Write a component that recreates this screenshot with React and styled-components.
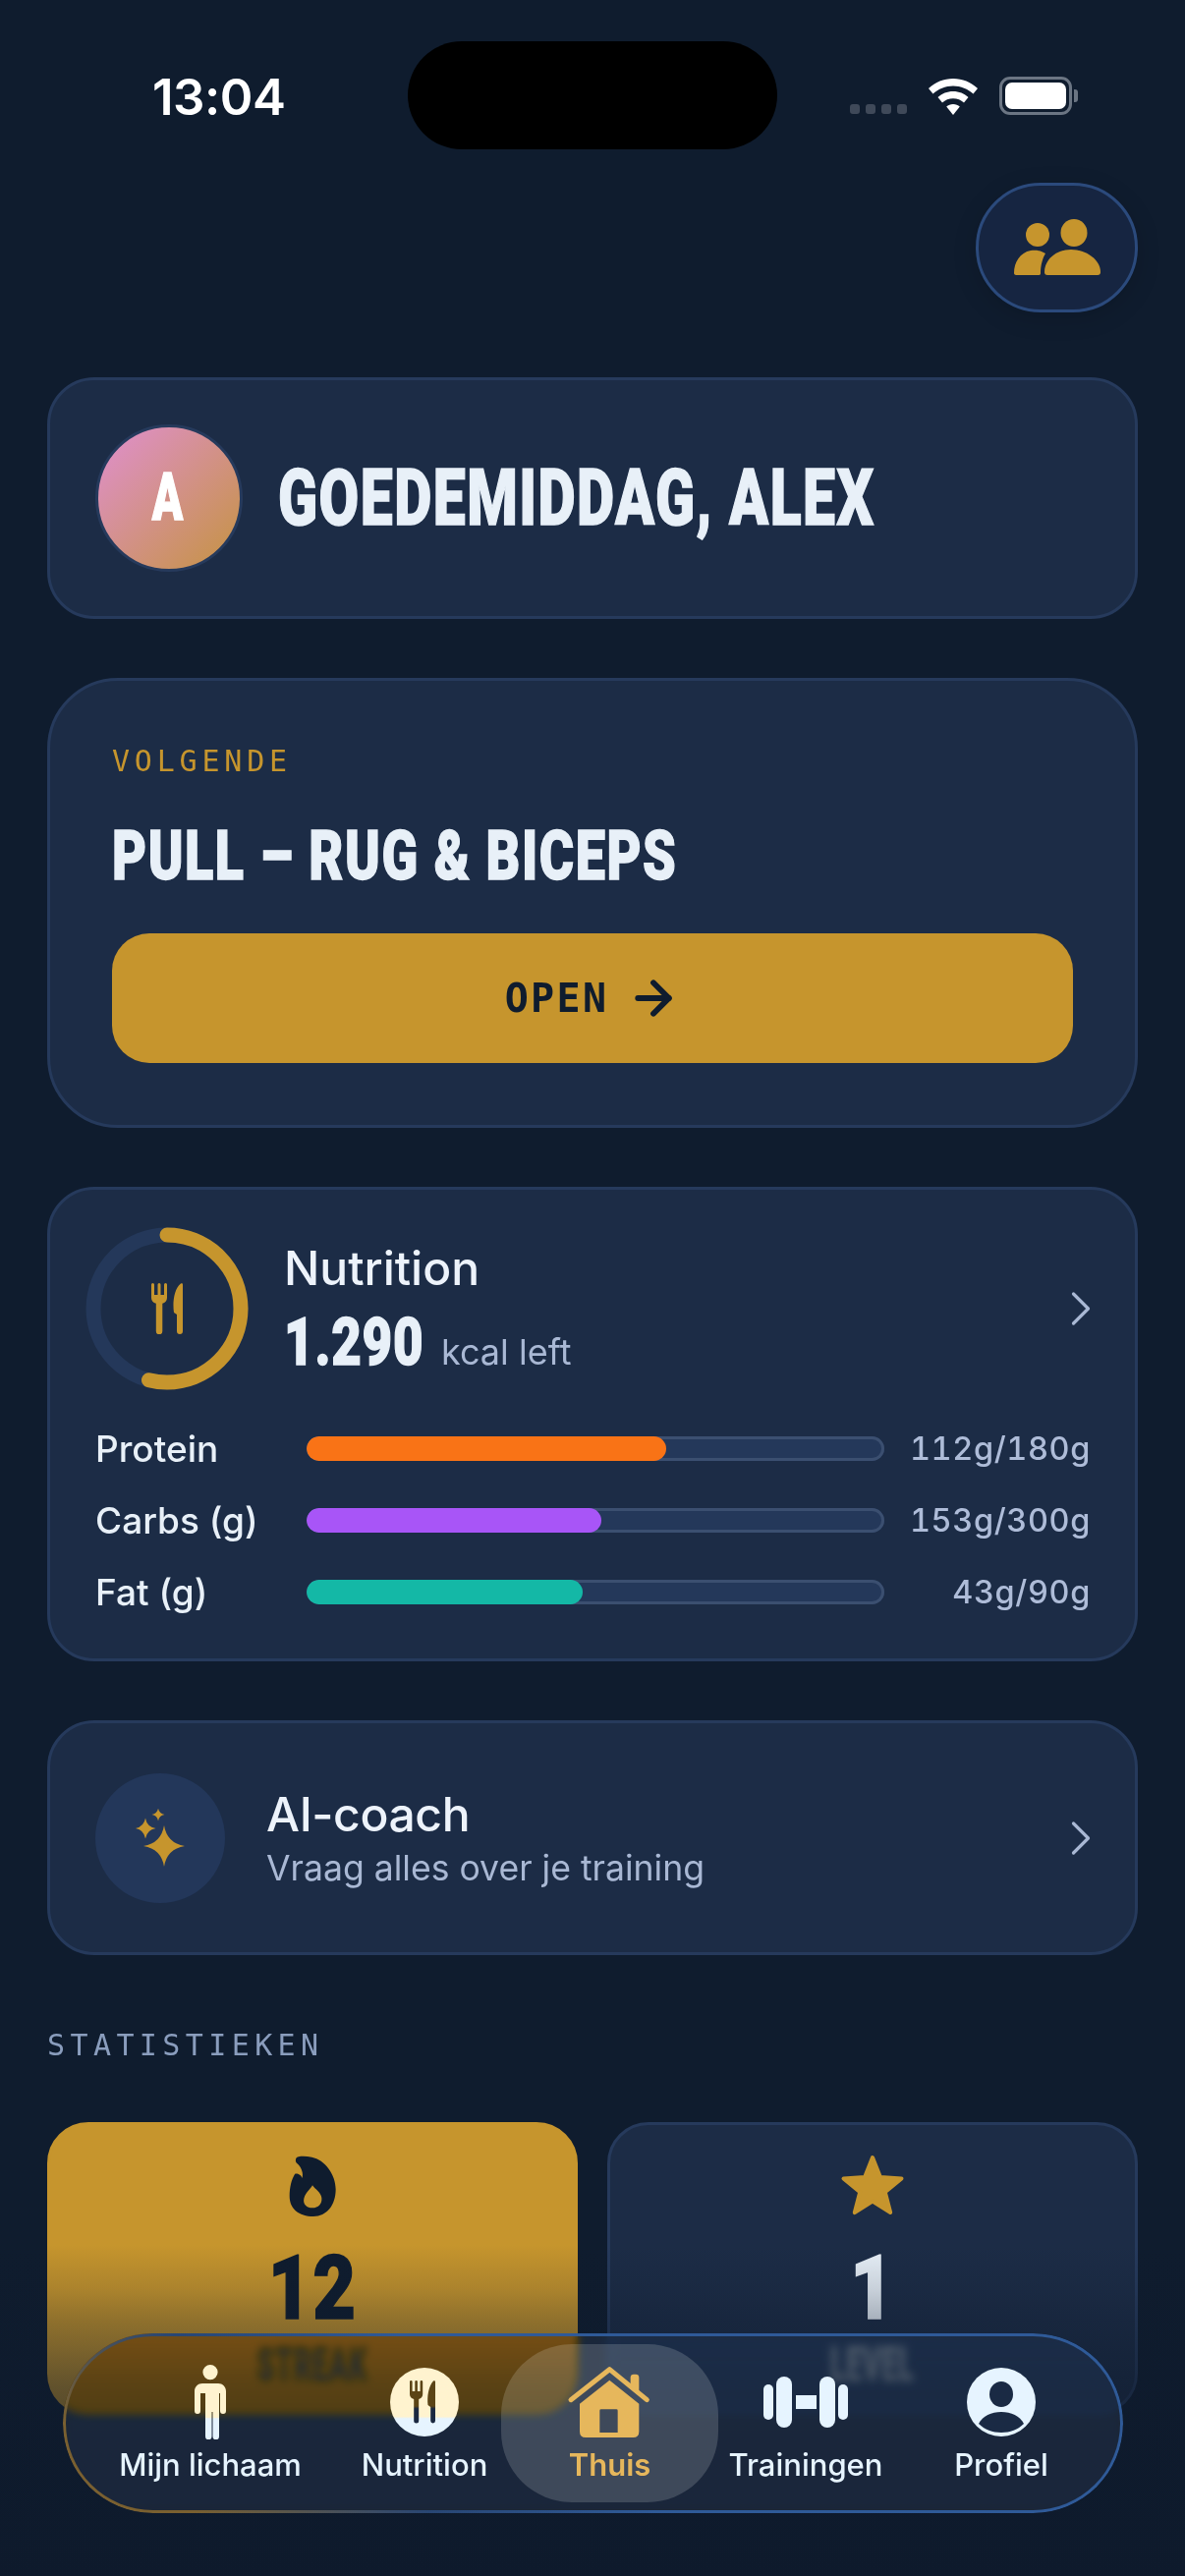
import React from 'react'
import styled, { createGlobalStyle } from 'styled-components'
import { ArrowRight, ChevronRight } from 'lucide-react'

const GlobalStyle = createGlobalStyle`
  html, body { margin: 0; padding: 0; background: #0f1c2e; }
  * { box-sizing: border-box; }
`

const Mono = `"DejaVu Sans Mono", "Liberation Mono", monospace`

// no condensed display face is installed, so the heavy face gets squeezed
const Display = styled.div`
  font-family: Roboto, "Liberation Sans", sans-serif;
  font-weight: 900;
  white-space: nowrap;
  font-size: ${p => p.$size}px;
  line-height: ${p => p.$line || p.$size}px;
  letter-spacing: ${p => p.$spacing || 0}px;
  -webkit-text-stroke: 1.4px currentColor;
  transform: scaleX(${p => p.$sx});
  transform-origin: ${p => p.$origin || 'left'} center;
  color: ${p => p.$color || 'inherit'};
`

const Screen = styled.div`
  position: relative;
  width: 1206px;
  height: 2622px;
  overflow: hidden;
  padding: 42px 48px 0;
  background: #0f1c2e;
  font-family: Inter, "Noto Sans", sans-serif;
  color: #e8f0f8;
`

const StatusBar = styled.div`
  display: flex;
  align-items: center;
  height: 110px;
`
const Time = styled.div`
  width: 367px;
  padding-left: 107px;
  padding-top: 2px;
  font-size: 51px;
  font-weight: 600;
  letter-spacing: -0.5px;
  color: #fff;
`
const Island = styled.div`
  width: 376px;
  height: 110px;
  border-radius: 55px;
  background: #000;
`
const StatusIcons = styled.div`
  display: flex;
  align-items: flex-end;
  gap: 22px;
  height: 40px;
  margin-left: 74px;
  padding-top: 2px;
`
const SignalDots = styled.div`
  display: flex;
  gap: 6px;
  margin-bottom: 1px;
`
const SignalDot = styled.span`
  width: 10px;
  height: 10px;
  border-radius: 3px;
  background: #3f4959;
`
const Battery = styled.div`
  position: relative;
  width: 74px;
  height: 39px;
  padding: 3px;
  border: 3px solid #6b7583;
  border-radius: 11px;
  &::after {
    content: '';
    position: absolute;
    right: -9px;
    top: 10px;
    width: 4px;
    height: 13px;
    border-radius: 0 3px 3px 0;
    background: #6b7583;
  }
`
const BatteryFill = styled.div`
  height: 100%;
  border-radius: 7px;
  background: #fff;
`

const TopRow = styled.div`
  display: flex;
  justify-content: flex-end;
  margin-top: 34px;
`
const TeamButton = styled.div`
  display: flex;
  align-items: center;
  justify-content: center;
  width: 165px;
  height: 132px;
  border-radius: 66px;
  border: 3px solid #2b4a7c;
  background: #162541;
  box-shadow: 0 6px 24px rgba(0, 0, 0, 0.15);
`

const Stack = styled.div`
  display: flex;
  flex-direction: column;
  margin-top: 66px;
`
const Card = styled.div`
  background: #1c2c46;
  border: 3px solid #263a5c;
  border-radius: ${p => p.$radius || 48}px;
  margin-bottom: 60px;
`

const GreetingCard = styled(Card)`
  display: flex;
  align-items: center;
  gap: 36px;
  height: 246px;
  padding-left: 46px;
`
const Avatar = styled.div`
  display: flex;
  flex: none;
  align-items: center;
  justify-content: center;
  width: 150px;
  height: 150px;
  padding-right: 3px;
  border-radius: 50%;
  border: 3px solid #263a5c;
  background: linear-gradient(135deg, #e08fd0 0%, #c59340 100%);
  color: #fff;
`

const NextCard = styled(Card)`
  height: 458px;
  padding: 66px 63px 0;
`
const Eyebrow = styled.div`
  font-family: ${Mono};
  font-size: 30px;
  line-height: 32px;
  letter-spacing: ${p => p.$spacing}px;
  color: ${p => p.$color};
`
const WorkoutTitle = styled(Display)`
  margin-top: 44px;
`
const OpenButton = styled.div`
  display: flex;
  align-items: center;
  justify-content: center;
  gap: 19px;
  height: 132px;
  margin-top: 44px;
  border-radius: 38px;
  background: #c6952d;
  color: #0f1c2e;
  font-family: ${Mono};
  font-weight: 700;
  font-size: 40px;
  letter-spacing: 2.3px;
`

const NutritionCard = styled(Card)`
  height: 483px;
  padding: 37px 46px 0;
`
const NutritionHead = styled.div`
  display: flex;
  align-items: center;
  gap: 35px;
  height: 168px;
  margin-left: -11px;
`
const Ring = styled.div`
  position: relative;
  flex: none;
  width: 168px;
  height: 168px;
`
const RingIcon = styled.div`
  position: absolute;
  inset: 0;
  display: flex;
  align-items: center;
  justify-content: center;
`
const HeadText = styled.div`
  flex: 1;
  padding-bottom: 5px;
`
const CardTitle = styled.div`
  font-size: 48px;
  line-height: 58px;
  font-weight: 500;
  color: #edf3fb;
`
const CoachTitle = styled(CardTitle)`
  letter-spacing: -0.4px;
`
const KcalLine = styled.div`
  display: flex;
  align-items: baseline;
  margin-top: 18px;
`
const KcalBox = styled.div`
  width: 160px;
`
const MutedText = styled.div`
  font-size: 36px;
  color: #a9b8d4;
`
const Chevron = styled(ChevronRight)`
  flex: none;
  margin-right: -21px;
  color: #a9b8d4;
`
const MacroList = styled.div`
  display: grid;
  gap: 37px;
  margin-top: 40px;
`
const MacroRow = styled.div`
  display: flex;
  align-items: center;
  height: 36px;
`
const MacroName = styled.div`
  width: 215px;
  font-size: 37px;
  font-weight: 500;
  color: #e8f0f8;
`
const Track = styled.div`
  flex: none;
  width: 588px;
  height: 25px;
  border-radius: 13px;
  background: #24385a;
  box-shadow: inset 0 0 0 3px #3b4f70;
  overflow: hidden;
`
const Fill = styled.div`
  height: 100%;
  border-radius: 13px;
  background: ${p => p.$color};
`
const MacroValue = styled.div`
  flex: 1;
  margin-right: -1px;
  text-align: right;
  font-size: 32.5px;
  font-weight: 500;
  font-variant-numeric: tabular-nums;
  letter-spacing: 0.6px;
  color: #aebcd8;
`

const CoachCard = styled(Card)`
  display: flex;
  align-items: center;
  height: 239px;
  padding: 0 46px;
`
const SparkleCircle = styled.div`
  display: flex;
  flex: none;
  align-items: center;
  justify-content: center;
  width: 132px;
  height: 132px;
  margin-right: 42px;
  border-radius: 50%;
  background: #23375a;
`
const CoachText = styled.div`
  flex: 1;
`
const CoachSub = styled(MutedText)`
  margin-top: 4px;
  font-size: 35.6px;
`

const StatsHeading = styled(Eyebrow)`
  margin-top: 16px;
`
const StatsGrid = styled.div`
  display: grid;
  grid-template-columns: 540px 540px;
  gap: 30px;
  margin-top: 62px;
`
const StatCard = styled.div`
  display: flex;
  flex-direction: column;
  align-items: center;
  height: 298px;
  padding-top: 26px;
  border-radius: 42px;
  border: 3px solid ${p => (p.$gold ? '#c6952d' : '#263a5c')};
  background: ${p => (p.$gold ? '#c6952d' : '#1c2c46')};
  color: ${p => (p.$gold ? '#0f1c2e' : '#e8f0f8')};
`
const StatIcon = styled.div`
  display: flex;
  align-items: center;
  justify-content: center;
  height: 72px;
`
const StatValue = styled(Display)`
  margin-top: 29px;
`
const StatLabel = styled(Display)`
  margin-top: 17px;
  opacity: 0.75;
`

const Scrim = styled.div`
  position: absolute;
  left: 0;
  right: 0;
  bottom: 0;
  height: 337px;
  pointer-events: none;
  background: linear-gradient(
    180deg,
    rgba(14, 26, 44, 0) 0%,
    rgba(14, 26, 44, 0.14) 13%,
    rgba(14, 26, 44, 0.3) 23%,
    rgba(14, 26, 44, 0.55) 43%,
    rgba(14, 26, 44, 0.92) 100%
  );
`
const NavBar = styled.nav`
  position: absolute;
  left: 64px;
  top: 2375px;
  width: 1079px;
  height: 183px;
  padding-left: 10px;
  border-radius: 92px;
  display: grid;
  grid-template-columns: 280px 156px 221px 178px 220px;
  background: rgba(54, 50, 42, 0.48);
  backdrop-filter: blur(4px) saturate(2.6);
  &::after {
    content: '';
    position: absolute;
    inset: 0;
    padding: 3px;
    border-radius: inherit;
    background: linear-gradient(215deg, #2f5a98 55%, #284674 72%, #7a6030 90%);
    -webkit-mask: linear-gradient(#000 0 0) content-box, linear-gradient(#000 0 0);
    -webkit-mask-composite: xor;
    mask-composite: exclude;
    pointer-events: none;
  }
`
const NavItem = styled.div`
  display: flex;
  flex-direction: column;
  align-items: center;
  height: 161px;
  margin-top: 11px;
  border-radius: 72px;
  background: ${p => (p.$active ? 'rgba(255, 255, 255, 0.16)' : 'transparent')};
  color: ${p => (p.$active ? '#e6b75c' : '#e6f4ff')};
  font-size: 31px;
  font-weight: ${p => (p.$active ? 600 : 500)};
`
const NavIcon = styled.div`
  display: flex;
  align-items: center;
  justify-content: center;
  height: 76px;
  margin-top: 21px;
`
const NavLabel = styled.div`
  margin-top: 7px;
  line-height: 38px;
  white-space: nowrap;
`

const Utensils = ({ height, fill }) => (
  <svg width={(height * 32) / 52} height={height} viewBox="0 0 32 52">
    <path
      fill={fill}
      d="M0 1.5a1.5 1.5 0 0 1 3 0V12H6.5V1.5a1.5 1.5 0 0 1 3 0V12H13V1.5a1.5 1.5 0 0 1 3 0V15c0 3-2 5-4.7 5.8V49a3.2 3.2 0 0 1-6.5 0V20.8C2 20 0 18 0 15Z"
    />
    <path fill={fill} d="M32 1.5V49a3 3 0 0 1-6 0V32l-3-2C21.5 20 23 6 30 .5 31-.2 32 .3 32 1.5Z" />
  </svg>
)

const TeamIcon = () => (
  <svg width="88" height="58" viewBox="0 0 88 58" fill="#c6952d">
    <ellipse cx="24" cy="16" rx="12" ry="12" />
    <ellipse cx="61" cy="14" rx="13.5" ry="14" />
    <path d="M0 55c0-11 6-21 17-23 5-1 11 0 15 3-3 5-5 12-5 20 0 1-.5 2-1.5 2H2c-1 0-2-1-2-2Z" />
    <path d="M34 57c-2 0-3-1-3-3 0-13 12-23 27-23s30 10 30 23c0 2-1 3-3 3Z" />
  </svg>
)

const star4 = (cx, cy, r) => {
  const k = r * 0.14
  return `M${cx} ${cy - r}Q${cx + k} ${cy - k} ${cx + r} ${cy}Q${cx + k} ${cy + k} ${cx} ${cy + r}Q${cx - k} ${cy + k} ${cx - r} ${cy}Q${cx - k} ${cy - k} ${cx} ${cy - r}Z`
}
const SparkleIcon = () => (
  <svg width="50" height="60" viewBox="0 0 50 60" fill="#c6952d">
    <path d={star4(29, 38, 21)} />
    <path d={star4(10, 20, 10.5)} />
    <path d={star4(23, 6, 6.5)} />
  </svg>
)

const FlameIcon = () => (
  <svg width="80" height="80" viewBox="-8 0 240 240" fill="#0f1c2e">
    <path
      fillRule="evenodd"
      d="M62 35C66 28 90 28 110 32 150 40 183 85 183 130 183 180 155 213 115 213 70 213 42 190 42 150 42 125 48 100 58 84 62 80 78 84 80 96 86 84 78 60 64 50 60 46 60 40 62 35ZM112 118C106 130 92 138 86 158 82 176 95 187 112 187 130 187 142 174 140 156 138 140 120 130 112 118Z"
    />
  </svg>
)

const StarIcon = () => (
  <svg width="66" height="64" viewBox="0 0 66 64" fill="#c6952d" stroke="#c6952d" strokeWidth="4" strokeLinejoin="round">
    <path d="M33 3 40.9 23.100 62.500 24.400 45.800 38.200 51.200 59.100 33 47.500 14.800 59.100 20.200 38.200 3.500 24.400 25.100 23.100Z" />
  </svg>
)

const PersonIcon = () => (
  <svg width="32" height="76" viewBox="0 0 32 76">
    <defs>
      <linearGradient id="personFill" x1="0" y1="0" x2="0" y2="1">
        <stop offset="0.7" stopColor="#fff3cf" />
        <stop offset="0.72" stopColor="#e6f4ff" />
      </linearGradient>
    </defs>
    <path
      fill="url(#personFill)"
      d="M16 0a7.600 7.600 0 1 1 0 15.200A7.600 7.600 0 0 1 16 0ZM8 19h16c4.500 0 8 3.500 8 8v20a3 3 0 0 1-6 0V29h-1v44a3.200 3.200 0 0 1-6.500 0V48h-1v25a3.200 3.200 0 0 1-6.500 0V29H6v18a3 3 0 0 1-6 0V27c0-4.500 3.500-8 8-8Z"
    />
  </svg>
)

const NutritionNavIcon = () => (
  <svg width="70" height="70" viewBox="0 0 70 70">
    <defs>
      <linearGradient id="plateFill" x1="0" y1="0" x2="0" y2="1">
        <stop offset="0.71" stopColor="#fff3cf" />
        <stop offset="0.74" stopColor="#e6f4ff" />
      </linearGradient>
      <linearGradient id="cutleryFill" x1="0" y1="0" x2="0" y2="1">
        <stop offset="0.6" stopColor="#5b4416" />
        <stop offset="0.66" stopColor="#1a2840" />
      </linearGradient>
    </defs>
    <circle cx="35" cy="35" r="35" fill="url(#plateFill)" />
    <g transform="translate(20 13)">
      <path
        fill="url(#cutleryFill)"
        d="M0 1.300a1.300 1.300 0 0 1 2.600 0V11H5.300V1.300a1.300 1.300 0 0 1 2.600 0V11h2.700V1.300a1.300 1.300 0 0 1 2.600 0V14c0 2.600-1.700 4.300-4 5V41a2.500 2.500 0 0 1-5 0V19C1.700 18.300 0 16.600 0 14Z"
      />
      <path
        fill="url(#cutleryFill)"
        d="M26 1.500V41a2.400 2.400 0 0 1-4.800 0V27L18.500 25C17.500 17 19 6 24 .6 25-.3 26 .3 26 1.500Z"
      />
    </g>
  </svg>
)

const HouseIcon = () => (
  <svg width="100" height="90" viewBox="0 0 300 270" fill="#e6b75c">
    <path
      fillRule="evenodd"
      d="M148 68 238 140V225Q238 243 220 243H75Q57 243 57 225V140ZM122 157Q118 157 118 161V228H173V161Q173 157 169 157Z"
    />
    <path d="M212 60Q212 50 222 50H228Q238 50 238 60V112L212 92Z" />
    <path d="M30 128 148 35 262 128" fill="none" stroke="#e6b75c" strokeWidth="15" strokeLinecap="round" strokeLinejoin="round" />
  </svg>
)

const DumbbellIcon = () => (
  <svg width="86" height="52" viewBox="0 0 86 52" fill="#e6f4ff">
    <rect x="0" y="8" width="10" height="36" rx="5" />
    <rect x="13" y="0" width="16" height="52" rx="8" />
    <rect x="33" y="19" width="21" height="14" />
    <rect x="57" y="0" width="16" height="52" rx="8" />
    <rect x="76" y="8" width="10" height="36" rx="5" />
  </svg>
)

const ProfileIcon = () => (
  <svg width="70" height="70" viewBox="0 0 70 70">
    <circle cx="35" cy="35" r="35" fill="#e6f4ff" />
    <ellipse cx="35" cy="27" rx="12" ry="13" fill="#1a2a44" />
    <path d="M12 57c4-8 13-12 23-12s19 4 23 12c-6 6-14 9-23 9s-17-3-23-9Z" fill="#1a2a44" />
  </svg>
)

const macros = [
  { name: 'Protein', value: '112g/180g', pct: 62.2, color: '#f97316' },
  { name: 'Carbs (g)', value: '153g/300g', pct: 51, color: '#a855f7' },
  { name: 'Fat (g)', value: '43g/90g', pct: 47.8, color: '#14b8a6' },
]

export default function App() {
  return (
    <Screen>
      <GlobalStyle />
      <StatusBar>
        <Time>13:04</Time>
        <Island />
        <StatusIcons>
          <SignalDots>
            <SignalDot />
            <SignalDot />
            <SignalDot />
            <SignalDot />
          </SignalDots>
          <svg width="50" height="37" viewBox="0 0 50 37" fill="#fff">
            <path d="M25 0c9.500 0 18 3.600 25 10l-4.500 5.500C40 10.500 33 7.500 25 7.500S10 10.500 4.500 15.500L0 10C7 3.600 15.500 0 25 0Z" />
            <path d="M25 13c6 0 11.500 2.300 15.500 6l-4.500 5.500c-3-2.700-6.800-4.200-11-4.200s-8 1.500-11 4.200L9.500 19c4-3.700 9.500-6 15.500-6Z" />
            <path d="M25 26c2.700 0 5 1 6.800 2.500L25 37l-6.800-8.500C20 27 22.300 26 25 26Z" />
          </svg>
          <Battery>
            <BatteryFill />
          </Battery>
        </StatusIcons>
      </StatusBar>

      <TopRow>
        <TeamButton>
          <TeamIcon />
        </TeamButton>
      </TopRow>

      <Stack>
        <GreetingCard>
          <Avatar>
            <Display $size={66} $sx={0.7} $origin="center">A</Display>
          </Avatar>
          <Display $size={79} $sx={0.745} $spacing={2} $color="#e8f0f8">GOEDEMIDDAG, ALEX</Display>
        </GreetingCard>

        <NextCard $radius={72}>
          <Eyebrow $color="#c6952d" $spacing={4.8}>VOLGENDE</Eyebrow>
          <WorkoutTitle $size={71} $sx={0.76} $spacing={2} $color="#e8f0f8">PULL – RUG &amp; BICEPS</WorkoutTitle>
          <OpenButton>
            OPEN
            <ArrowRight size={54} strokeWidth={2.6} />
          </OpenButton>
        </NextCard>

        <NutritionCard>
          <NutritionHead>
            <Ring>
              <svg width="168" height="168" viewBox="0 0 168 168">
                <circle cx="84" cy="84" r="75" fill="none" stroke="#24385a" strokeWidth="15" />
                <circle
                  cx="84"
                  cy="84"
                  r="75"
                  fill="none"
                  stroke="#c6952d"
                  strokeWidth="15"
                  strokeLinecap="round"
                  strokeDasharray="254 471"
                  transform="rotate(-90 84 84)"
                />
              </svg>
              <RingIcon>
                <Utensils height={52} fill="#c6952d" />
              </RingIcon>
            </Ring>
            <HeadText>
              <CardTitle>Nutrition</CardTitle>
              <KcalLine>
                <KcalBox>
                  <Display $size={66} $line={57} $sx={0.8} $spacing={1} $color="#e8f0f8">1.290</Display>
                </KcalBox>
                <MutedText>kcal left</MutedText>
              </KcalLine>
            </HeadText>
            <Chevron size={60} strokeWidth={1.3} />
          </NutritionHead>
          <MacroList>
            {macros.map(m => (
              <MacroRow key={m.name}>
                <MacroName>{m.name}</MacroName>
                <Track>
                  <Fill $color={m.color} style={{ width: `${m.pct}%` }} />
                </Track>
                <MacroValue>{m.value}</MacroValue>
              </MacroRow>
            ))}
          </MacroList>
        </NutritionCard>

        <CoachCard>
          <SparkleCircle>
            <SparkleIcon />
          </SparkleCircle>
          <CoachText>
            <CoachTitle>AI-coach</CoachTitle>
            <CoachSub>Vraag alles over je training</CoachSub>
          </CoachText>
          <Chevron size={60} strokeWidth={1.3} />
        </CoachCard>

        <StatsHeading $color="#8a9dbd" $spacing={5.4}>STATISTIEKEN</StatsHeading>
        <StatsGrid>
          <StatCard $gold>
            <StatIcon>
              <FlameIcon />
            </StatIcon>
            <StatValue $size={90} $line={80} $sx={0.84} $spacing={2} $origin="center">12</StatValue>
            <StatLabel $size={48} $line={40} $sx={0.58} $spacing={2} $origin="center">STREAK</StatLabel>
          </StatCard>
          <StatCard>
            <StatIcon>
              <StarIcon />
            </StatIcon>
            <StatValue $size={90} $line={80} $sx={0.84} $spacing={2} $origin="center">1</StatValue>
            <StatLabel $size={48} $line={40} $sx={0.58} $spacing={2} $origin="center">LEVEL</StatLabel>
          </StatCard>
        </StatsGrid>
      </Stack>

      <Scrim />
      <NavBar>
        <NavItem>
          <NavIcon><PersonIcon /></NavIcon>
          <NavLabel>Mijn lichaam</NavLabel>
        </NavItem>
        <NavItem>
          <NavIcon><NutritionNavIcon /></NavIcon>
          <NavLabel>Nutrition</NavLabel>
        </NavItem>
        <NavItem $active>
          <NavIcon><HouseIcon /></NavIcon>
          <NavLabel>Thuis</NavLabel>
        </NavItem>
        <NavItem>
          <NavIcon><DumbbellIcon /></NavIcon>
          <NavLabel>Trainingen</NavLabel>
        </NavItem>
        <NavItem>
          <NavIcon><ProfileIcon /></NavIcon>
          <NavLabel>Profiel</NavLabel>
        </NavItem>
      </NavBar>
    </Screen>
  )
}
